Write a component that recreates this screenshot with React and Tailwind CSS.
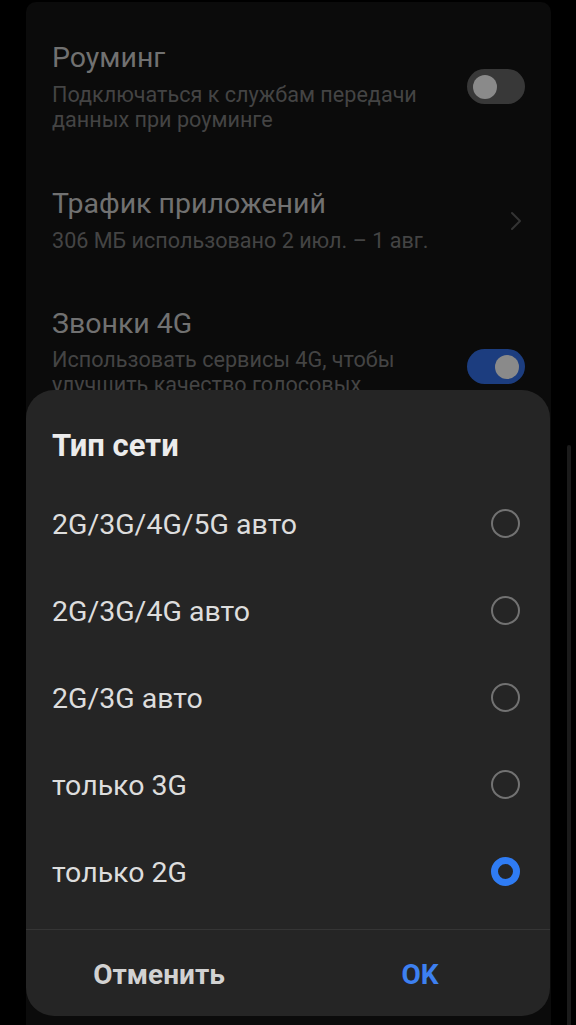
import React from "react";

const font = { fontFamily: "Roboto, 'Noto Sans', sans-serif" };

function Toggle({ on }) {
  return (
    <div
      className={`w-[58px] h-[35px] rounded-full flex items-center px-[6px] ${
        on ? "bg-[#1c3d7f] justify-end" : "bg-[#383838] justify-start"
      }`}
    >
      <div className="w-[24px] h-[24px] rounded-full bg-[#8a8a8a]" />
    </div>
  );
}

function Radio({ checked }) {
  if (checked) {
    return (
      <div className="w-[29px] h-[29px] rounded-full border-[7px] border-[#2f7cf4]" />
    );
  }
  return <div className="w-[29px] h-[29px] rounded-full border-2 border-[#727272]" />;
}

const options = [
  "2G/3G/4G/5G авто",
  "2G/3G/4G авто",
  "2G/3G авто",
  "только 3G",
  "только 2G",
];

export default function App() {
  return (
    <div className="relative w-[576px] h-[1025px] bg-black overflow-hidden" style={font}>
      {/* background settings panel */}
      <div className="ml-[26px] mt-[2px] w-[525px] h-[1030px] bg-[#0b0b0b] rounded-t-[10px] px-[26px] pt-[36px]">
        <div className="flex items-start justify-between">
          <div>
            <div className="text-[28.5px] leading-[40px] text-[#717171]">Роуминг</div>
            <div className="text-[21.6px] leading-[25px] text-[#444444] mt-[4px]">
              Подключаться к службам передачи
              <br />
              данных при роуминге
            </div>
          </div>
          <div className="mt-[31px]">
            <Toggle on={false} />
          </div>
        </div>

        <div className="flex items-start justify-between mt-[52px]">
          <div>
            <div className="text-[28.5px] leading-[40px] text-[#717171]">Трафик приложений</div>
            <div className="text-[21.6px] leading-[25px] text-[#444444] mt-[4px]">
              306 МБ использовано 2 июл. – 1 авг.
            </div>
          </div>
          <div className="mt-[25px] mr-[2px]">
            <svg width="14" height="24" viewBox="0 0 14 24" fill="none">
              <path d="M3 4 L11 12 L3 20" stroke="#343434" strokeWidth="2" strokeLinecap="round" strokeLinejoin="round" />
            </svg>
          </div>
        </div>

        <div className="flex items-start justify-between mt-[51px]">
          <div>
            <div className="text-[28.5px] leading-[40px] text-[#717171]">Звонки 4G</div>
            <div className="text-[21.6px] leading-[25px] text-[#444444] mt-[3px]">
              Использовать сервисы 4G, чтобы
              <br />
              улучшить качество голосовых
            </div>
          </div>
          <div className="mt-[45px]">
            <Toggle on={true} />
          </div>
        </div>
      </div>

      {/* scrollbar */}
      <div className="absolute left-[567px] top-[445px] w-[4px] h-[600px] rounded-full bg-[#1b1b1b]" />

      {/* dialog */}
      <div className="absolute left-[26px] top-[390px] w-[524px] h-[626px] bg-[#252525] rounded-[28px] flex flex-col">
        <div className="pt-[36px] px-[26px] text-[31px] leading-[40px] font-bold text-[#ececec]">
          Тип сети
        </div>
        <div className="mt-[14px] flex flex-col">
          {options.map((o, i) => (
            <div key={o} className="h-[87px] flex items-center justify-between pl-[26px] pr-[30px]">
              <span className="text-[28.5px] text-[#dddddd] pt-[3px]">{o}</span>
              <Radio checked={i === 4} />
            </div>
          ))}
        </div>
        <div className="mt-[14px] h-[1px] bg-[#353535]" />
        <div className="flex-1 flex items-center pt-[4px]">
          <div className="w-1/2 flex justify-center pl-[4px]">
            <span className="text-[28px] font-bold text-[#d2d2d2]">Отменить</span>
          </div>
          <div className="w-1/2 flex justify-center pl-[2px]">
            <span className="text-[28px] font-bold text-[#3d80f0]">OK</span>
          </div>
        </div>
      </div>
    </div>
  );
}
